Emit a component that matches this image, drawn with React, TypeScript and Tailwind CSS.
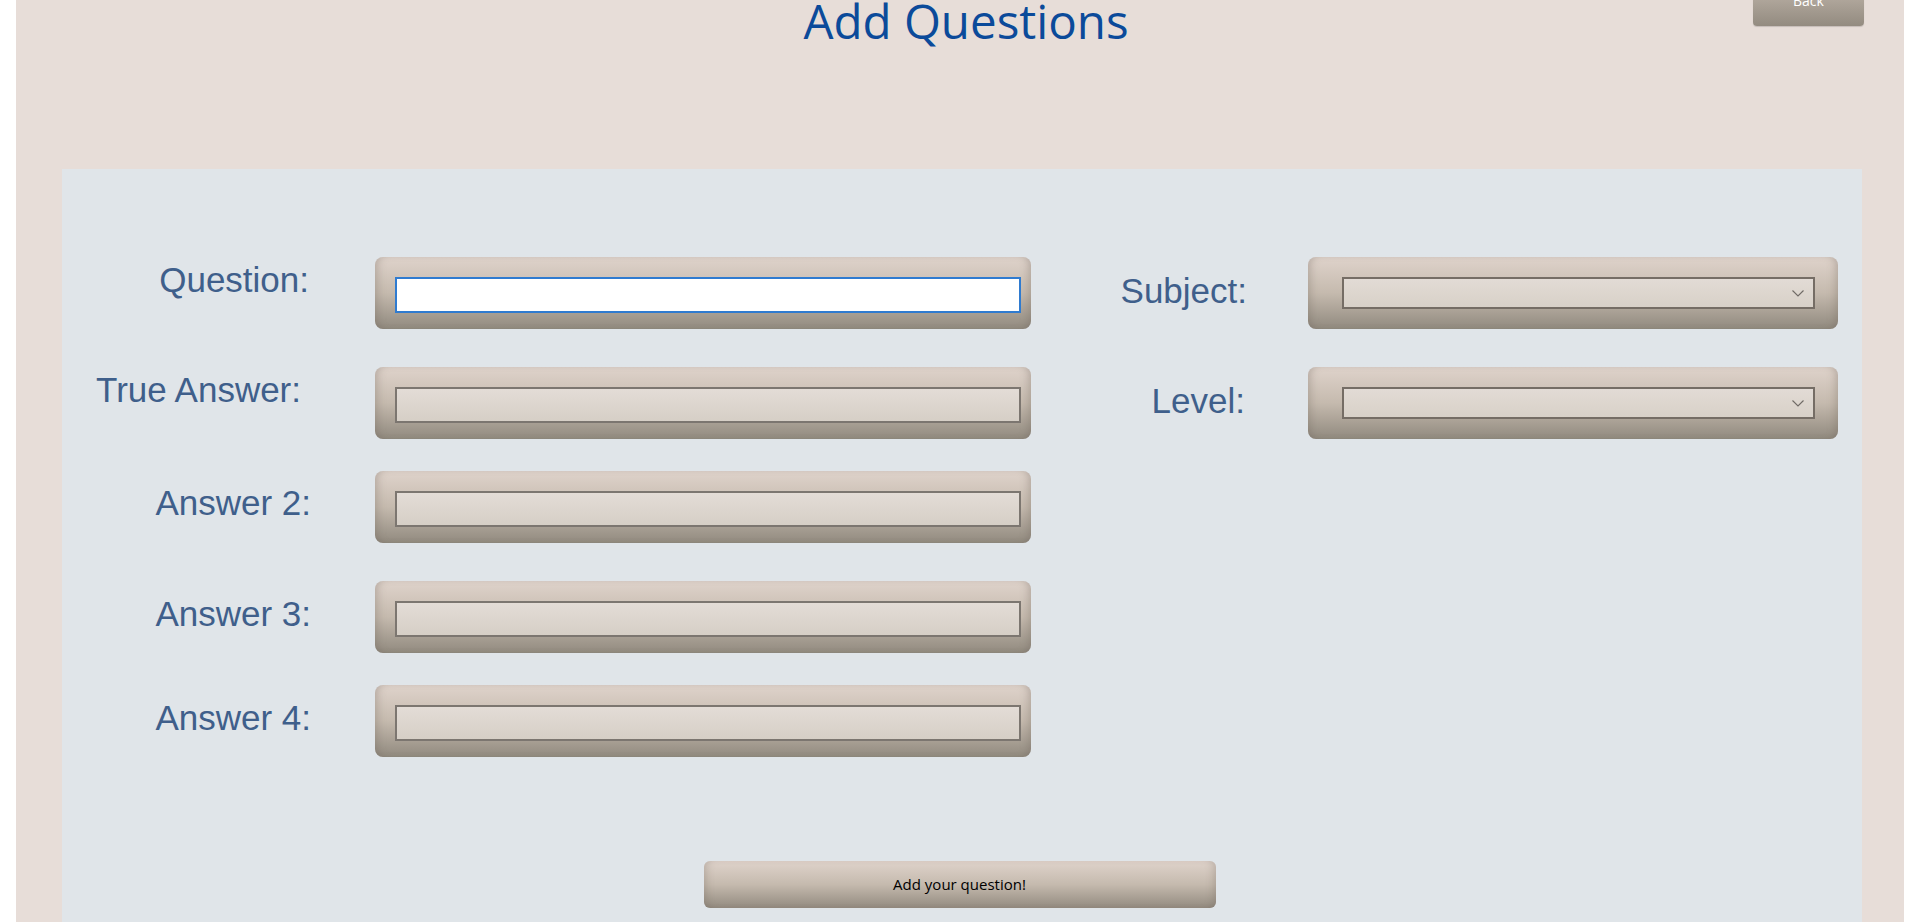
const label =
  "text-[35px] leading-[40px] text-[#3f5f8b] text-right font-['Liberation_Sans',Arial,sans-serif] whitespace-nowrap";
const shell =
  "h-[72px] rounded-[8px] bg-linear-to-b from-[#dfd3cb] via-[#c5baae] to-[#918a7f] shadow-[inset_7px_0_9px_-5px_rgba(105,95,85,0.35),inset_-7px_0_9px_-5px_rgba(105,95,85,0.35)]";

const TextBox = ({ focused = false }: { focused?: boolean }) => (
  <div className={`${shell} w-[656px] pl-[20px] pr-[10px] pt-[20px]`}>
    {focused ? (
      <div className="h-[36px] border-2 border-[#2f7bd0] bg-white" />
    ) : (
      <div className="h-[36px] border-2 border-[#7c7670] bg-linear-to-b from-[#e3dcd6] to-[#d6cfc6]" />
    )}
  </div>
);

const SelectBox = () => (
  <div className={`${shell} w-[530px] pl-[34px] pr-[23px] pt-[20px]`}>
    <div className="h-[32px] border-2 border-[#756d65] bg-linear-to-b from-[#e2dbd5] to-[#d8d1c8] flex items-center justify-end pr-[9px]">
      <svg width="12" height="7" viewBox="0 0 12 7" fill="none">
        <path d="M0.5 0.5 L6 6 L11.5 0.5" stroke="#6f6a65" strokeWidth="1.1" />
      </svg>
    </div>
  </div>
);

export default function App() {
  return (
    <div className="h-[922px] overflow-hidden bg-white pl-[16px] pr-[15px]">
      <div className="h-full bg-[#e7ddd8] flex flex-col pl-[46px] pr-[42px]">
        {/* header */}
        <div className="relative h-[169px] shrink-0">
          <h1 className="pl-[8px] text-center text-[47.5px] leading-[42px] text-[#0b4a9a] font-['Open_Sans',sans-serif] font-normal">
            Add Questions
          </h1>
          <button className="absolute right-[-2px] top-[-26px] w-[111px] h-[52px] rounded-[4px] bg-linear-to-b from-[#cbc0b5] to-[#938b80] text-white text-[14px] font-['Open_Sans',sans-serif] shadow-[0_1px_1px_rgba(0,0,0,0.15)]">
            Back
          </button>
        </div>

        {/* form panel */}
        <div className="flex-1 bg-[#e0e5e9] pt-[88px]">
          <div className="flex">
            <div className={`${label} w-[313px] pr-[66px] pt-[3px]`}>Question:</div>
            <TextBox focused />
            <div className={`${label} w-[277px] pr-[61px] pt-[14px]`}>Subject:</div>
            <SelectBox />
          </div>

          <div className="flex mt-[38px]">
            <div className={`${label} w-[313px] pr-[74px] pt-[3px]`}>True Answer:</div>
            <TextBox />
            <div className={`${label} w-[277px] pr-[63px] pt-[14px]`}>Level:</div>
            <SelectBox />
          </div>

          <div className="flex mt-[32px]">
            <div className={`${label} w-[313px] pr-[64px] pt-[12px]`}>Answer 2:</div>
            <TextBox />
          </div>

          <div className="flex mt-[38px]">
            <div className={`${label} w-[313px] pr-[64px] pt-[13px]`}>Answer 3:</div>
            <TextBox />
          </div>

          <div className="flex mt-[32px]">
            <div className={`${label} w-[313px] pr-[64px] pt-[13px]`}>Answer 4:</div>
            <TextBox />
          </div>

          <div className="flex justify-center pr-[5px] mt-[104px]">
            <button className="w-[512px] h-[47px] rounded-[6px] bg-linear-to-b from-[#dfd3cb] via-[#c5baae] to-[#938b80] shadow-[inset_7px_0_9px_-5px_rgba(105,95,85,0.3),inset_-7px_0_9px_-5px_rgba(105,95,85,0.3)] text-[15px] text-black font-['Open_Sans',sans-serif]">
              Add your question!
            </button>
          </div>
        </div>
      </div>
    </div>
  );
}
